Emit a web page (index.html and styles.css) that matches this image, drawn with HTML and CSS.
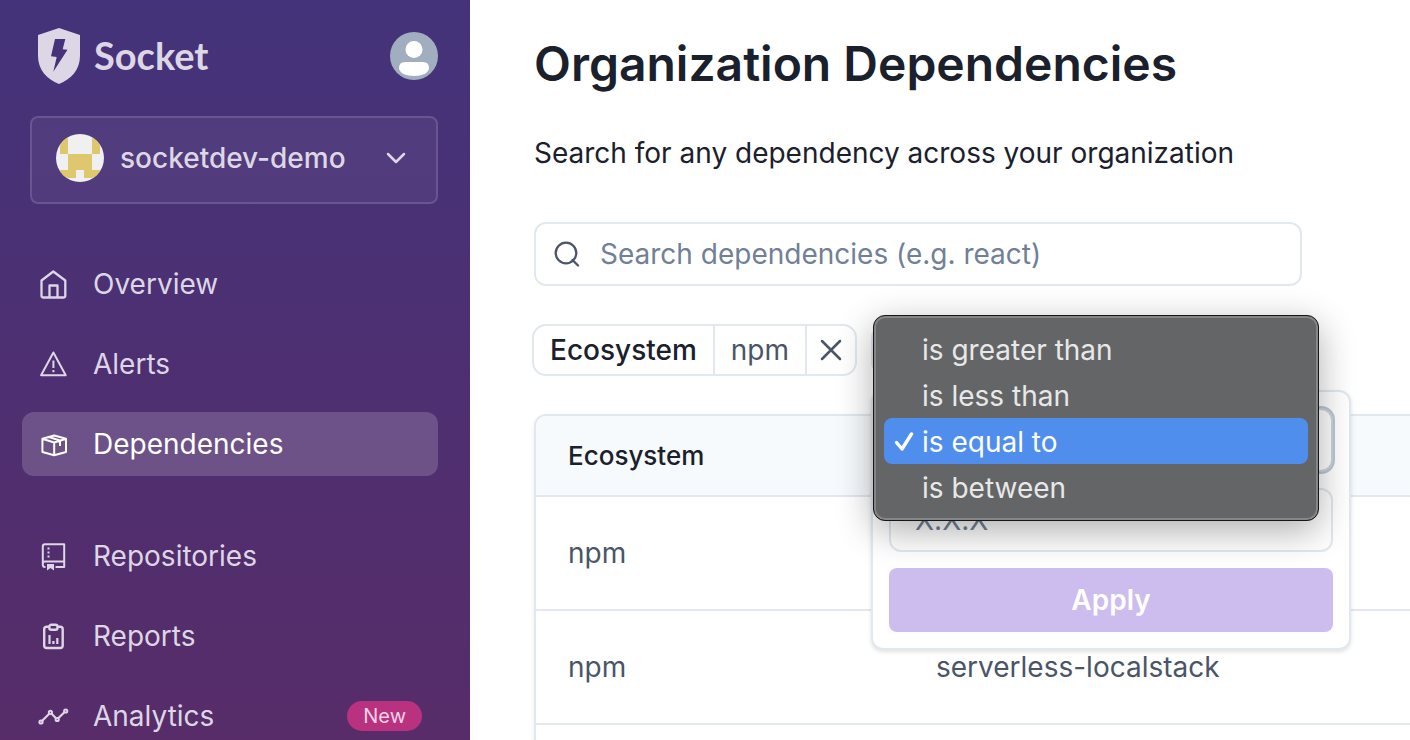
FILE: index.html
```html
<!DOCTYPE html>
<html lang="en">
<head>
<meta charset="utf-8">
<title>Organization Dependencies</title>
<link rel="stylesheet" href="styles.css">
</head>
<body>
<div class="app">
  <aside class="sidebar">
    <header class="brand-row">
      <a class="brand" href="#">
        <svg class="brand-mark" viewBox="0 0 42 56" width="42" height="56" aria-hidden="true">
          <path fill="currentColor" fill-rule="evenodd" d="M21 0 42 7V28C42 42 33 51 21 56 9 51 0 42 0 28V7ZM17 11 13 28.300 18.700 29 15.300 43.700 29.500 21.800 24.700 21.300 27.300 11Z"/>
        </svg>
        <span class="brand-name">Socket</span>
      </a>
      <button class="account" aria-label="Account">
        <svg viewBox="0 0 48 48" width="48" height="48" aria-hidden="true">
          <circle cx="24" cy="24" r="24" fill="#a0aec0"/>
          <circle cx="24" cy="17.500" r="8.500" fill="#fff"/>
          <path fill="#fff" d="M15 30H33Q39 30 39 36C39 41 32 44 24 44S9 41 9 36Q9 30 15 30Z"/>
        </svg>
      </button>
    </header>

    <button class="org">
      <svg class="org-avatar" viewBox="0 0 48 48" width="48" height="48" aria-hidden="true">
        <circle cx="24" cy="24" r="24" fill="#f0f0f0"/>
        <clipPath id="disc"><circle cx="24" cy="24" r="24"/></clipPath>
        <path clip-path="url(#disc)" fill="#dec76c" d="M4 4h8v16H4zM36 4h8v16h-8zM12 20h24v16H44v8H28V36H20v8H4V36h8z"/>
      </svg>
      <span class="org-name">socketdev-demo</span>
      <svg class="chevron" viewBox="0 0 20 12" width="20" height="12" fill="none" stroke="currentColor" stroke-width="2.500" stroke-linecap="round" stroke-linejoin="round" aria-hidden="true"><path d="m2 2 8 8 8-8"/></svg>
    </button>

    <nav class="nav">
      <div class="nav-group">
        <a class="nav-item" href="#">
          <svg class="icon" viewBox="0 0 32 32" aria-hidden="true"><path stroke-width="2.300" d="M3.500 12.500 15.300 3.500 27.300 12.500V27.500Q27.300 29.500 25.300 29.500H5.500Q3.500 29.500 3.500 27.500ZM11.500 29.500V17.500H19.500V29.500"/></svg>
          <span>Overview</span>
        </a>
        <a class="nav-item" href="#">
          <svg class="icon" viewBox="0 0 32 32" aria-hidden="true"><path stroke-width="2" d="M15.400 4.500 27.700 27.300H3.100ZM15.400 12.500V20M15.400 22V24.300"/></svg>
          <span>Alerts</span>
        </a>
        <a class="nav-item active" href="#" aria-current="page">
          <svg class="icon" viewBox="0 0 32 32" aria-hidden="true"><path stroke-width="2" d="M16.200 7.500 28 10.800V24L16.200 27.300 4.400 24V10.800ZM4.400 10.800 16.200 14.500 28 10.800M16.200 14.500V27.300M11 9 22 12.500V18"/></svg>
          <span>Dependencies</span>
        </a>
      </div>
      <div class="nav-group">
        <a class="nav-item" href="#">
          <svg class="icon" viewBox="0 0 32 32" aria-hidden="true"><path stroke-width="2" d="M7.500 27H7Q4.800 27 4.800 24.500V6.500Q4.800 4.200 7 4.200H26.200V27H17.500M4.800 23.500Q4.800 21.500 7 21.500H26.200"/><path stroke-width="2" stroke-dasharray="2 2" d="M10.500 7.500V17.500"/><path fill="currentColor" stroke="none" d="M9 24h7v6.500l-3.500-2.500-3.500 2.500z"/></svg>
          <span>Repositories</span>
        </a>
        <a class="nav-item" href="#">
          <svg class="icon" viewBox="0 0 32 32" aria-hidden="true"><path stroke-width="2.400" d="M11 6.800H8.700Q6.200 6.800 6.200 9.300V25.500Q6.200 28 8.700 28H22.200Q24.700 28 24.700 25.500V9.300Q24.700 6.800 22.200 6.800H19.500"/><rect x="11.300" y="4.700" width="8.200" height="5" rx="2" stroke-width="2.400"/><path stroke-width="2.200" d="M11.500 15V24M15.400 21V24M19.300 18V24"/></svg>
          <span>Reports</span>
        </a>
        <a class="nav-item" href="#">
          <svg class="icon" viewBox="0 0 32 32" aria-hidden="true"><path stroke-width="2.200" d="M4.200 20.700 11.200 13.700M13.600 13.700 18 18.200M20.200 18.200 26.400 12.300"/><g stroke-width="2"><circle cx="3" cy="22" r="1.600"/><circle cx="12.400" cy="12.300" r="1.600"/><circle cx="19.200" cy="19.500" r="1.600"/><circle cx="27.700" cy="11" r="1.600"/></g></svg>
          <span>Analytics</span>
          <span class="badge">New</span>
        </a>
      </div>
    </nav>
  </aside>

  <main class="main">
    <h1 class="title">Organization Dependencies</h1>
    <p class="lead">Search for any dependency across your organization</p>

    <label class="search">
      <svg viewBox="0 0 26 26" width="26" height="26" fill="none" stroke="currentColor" stroke-width="2.300" stroke-linecap="round" aria-hidden="true"><circle cx="12" cy="12" r="10.300"/><path d="m18.500 19 5.500 5.500"/></svg>
      <input type="search" placeholder="Search dependencies (e.g. react)" aria-label="Search dependencies">
    </label>

    <div class="filters">
      <div class="chip">
        <span class="chip-name">Ecosystem</span>
        <span class="chip-value">npm</span>
        <button class="chip-remove" aria-label="Remove Ecosystem filter">
          <svg viewBox="0 0 22 22" width="22" height="22" fill="none" stroke="currentColor" stroke-width="2.500" stroke-linecap="round" aria-hidden="true"><path d="m2 2 18 18M20 2 2 20"/></svg>
        </button>
      </div>
      <div class="filter-anchor">
        <button class="chip chip-open" aria-label="Version filter" aria-expanded="true"></button>
        <form class="popover">
          <div class="select-wrap">
            <select class="field field-focused" aria-label="Comparison">
              <option>is greater than</option>
              <option>is less than</option>
              <option selected>is equal to</option>
              <option>is between</option>
            </select>
            <ul class="menu" role="listbox" aria-label="Comparison">
              <li class="menu-item" role="option">is greater than</li>
              <li class="menu-item" role="option">is less than</li>
              <li class="menu-item selected" role="option" aria-selected="true">
                <svg class="tick" viewBox="0 0 20 20" width="20" height="20" fill="none" stroke="currentColor" stroke-width="3.400" stroke-linecap="round" stroke-linejoin="round" aria-hidden="true"><path d="m2.500 11.500 5.500 6.500L17.500 3"/></svg>
                is equal to</li>
              <li class="menu-item" role="option">is between</li>
            </ul>
          </div>
          <input class="field" type="text" placeholder="X.X.X" aria-label="Version">
          <button class="apply" type="button">Apply</button>
        </form>
      </div>
    </div>

    <div class="table-wrap">
      <table class="table">
        <thead>
          <tr><th class="col-eco" scope="col">Ecosystem</th><th scope="col" aria-label="Dependency"></th></tr>
        </thead>
        <tbody>
          <tr><td>npm</td><td></td></tr>
          <tr><td>npm</td><td>serverless-localstack</td></tr>
          <tr><td></td><td></td></tr>
        </tbody>
      </table>
    </div>
  </main>
</div>
</body>
</html>
```
FILE: styles.css
```css
* { box-sizing: border-box; }

body {
  margin: 0;
  font: 400 28px/40px Inter, "Liberation Sans", sans-serif;
  color: #1a202c;
  background: #fff;
}

button, input, select { font: inherit; color: inherit; margin: 0; }
button { border: 0; background: none; padding: 0; cursor: pointer; }
a { color: inherit; text-decoration: none; }
svg { flex: none; display: block; }

.app {
  display: flex;
  height: 100vh;
  overflow: hidden;
}

/* Sidebar */
.sidebar {
  flex: none;
  width: 470px;
  padding: 28px 32px 0 22px;
  color: #ddd6e4;
  background: linear-gradient(#44337a, #572c69);
}
.brand-row {
  display: flex;
  align-items: center;
  justify-content: space-between;
  padding-left: 16px;
}
.brand { display: flex; align-items: center; gap: 14px; }
.brand-name { padding-bottom: 3px; font: 700 38px/48px Lato, sans-serif; }
.account { border-radius: 50%; }
.org {
  display: flex;
  align-items: center;
  width: 408px;
  height: 88px;
  margin: 32px 0 48px 8px;
  padding: 0 30px 4px 24px;
  border: 2px solid #6b5490;
  border-radius: 8px;
  background: rgba(255, 255, 255, 0.05);
}
.org-name { flex: 1; margin-left: 16px; text-align: left; font-weight: 500; }
.nav-group { display: grid; gap: 16px; margin-bottom: 48px; }
.nav-item {
  display: flex;
  align-items: center;
  height: 64px;
  padding: 0 16px;
  border-radius: 12px;
}
.nav-item.active { color: #fff; background: rgba(255, 255, 255, 0.17); }
.icon {
  width: 32px;
  height: 32px;
  margin-right: 23px;
  fill: none;
  stroke: currentColor;
  stroke-linejoin: round;
}
.badge {
  margin-left: auto;
  padding: 0 16px;
  border-radius: 15px;
  font-size: 20px;
  line-height: 30px;
  color: #f3d3e5;
  background: #b83280;
}

/* Main column */
.main { flex: 1; min-width: 0; padding: 32px 0 0 64px; }
.title { margin: 0; font-size: 48px; line-height: 64px; font-weight: 600; white-space: nowrap; }
.lead { margin: 37px 0 49px; white-space: nowrap; }
.search {
  display: flex;
  align-items: center;
  gap: 20px;
  max-width: 768px;
  height: 64px;
  margin-right: 108px;
  padding: 0 18px;
  border: 2px solid #e2e8f0;
  border-radius: 12px;
  color: #4a5568;
}
.search input {
  flex: 1;
  min-width: 0;
  padding: 0;
  border: 0;
  outline: 0;
  background: none;
}
::placeholder { color: #718096; opacity: 1; }

.filters {
  display: flex;
  gap: 14px;
  margin: 38px 0 38px -2px;
}
.chip {
  display: flex;
  height: 52px;
  border: 2px solid #e2e8f0;
  border-radius: 14px;
  line-height: 48px;
  background: #fff;
}
.chip-name { padding: 0 16px; font-weight: 500; }
.chip-value { padding: 0 16px; border: solid #e2e8f0; border-width: 0 2px; color: #4a5568; }
.chip-remove { padding: 0 13px; color: #4a5568; }
.chip-open { width: 160px; }
.filter-anchor { position: relative; }

.popover {
  position: absolute;
  z-index: 1;
  top: 66px;
  left: 0;
  display: grid;
  gap: 16px;
  width: 480px;
  padding: 16px;
  border: 2px solid #e2e8f0;
  border-radius: 12px;
  background: #fff;
  box-shadow: 0 2px 4px rgba(0, 0, 0, 0.12);
}
.field {
  display: block;
  width: 100%;
  height: 64px;
  padding: 0 24px;
  border: 2px solid #e2e8f0;
  border-radius: 12px;
  background: #fff;
}
.field-focused { border-color: #cbd5e0; box-shadow: 0 0 0 2px #bcc8d6; appearance: none; }
.apply {
  height: 64px;
  border-radius: 8px;
  font-weight: 600;
  color: #fff;
  background: #cdbcee;
}

.select-wrap { position: relative; }
.menu {
  position: absolute;
  z-index: 2;
  top: -93px;
  left: -16px;
  width: 446px;
  margin: 0;
  padding: 10px;
  list-style: none;
  border: 1px solid #161616;
  border-radius: 12px;
  color: #e8e8e8;
  background: #646567;
  box-shadow: inset 0 0 0 2px #858687, 0 10px 36px rgba(0, 0, 0, 0.32);
}
.menu-item {
  position: relative;
  height: 46px;
  padding-left: 38px;
  border-radius: 8px;
  line-height: 48px;
}
.menu-item.selected { color: #fff; background: #4f8eec; }
.tick { position: absolute; left: 10px; top: 13px; }

/* Results */
.table-wrap {
  overflow: hidden;
  border: solid #e2e8f0;
  border-width: 2px 0 0 2px;
  border-radius: 12px 0 0 0;
  box-shadow: 0 2px 4px rgba(0, 0, 0, 0.08);
}
.table {
  width: 100%;
  table-layout: fixed;
  border-collapse: separate;
  border-spacing: 0;
}
.table th, .table td {
  padding: 0 32px;
  border-bottom: 2px solid #e2e8f0;
  text-align: left;
  white-space: nowrap;
}
.table th { height: 81px; font-size: 26px; font-weight: 500; background: #f7fafc; }
.table td { height: 114px; color: #4a5568; }
.col-eco { width: 368px; }
```
